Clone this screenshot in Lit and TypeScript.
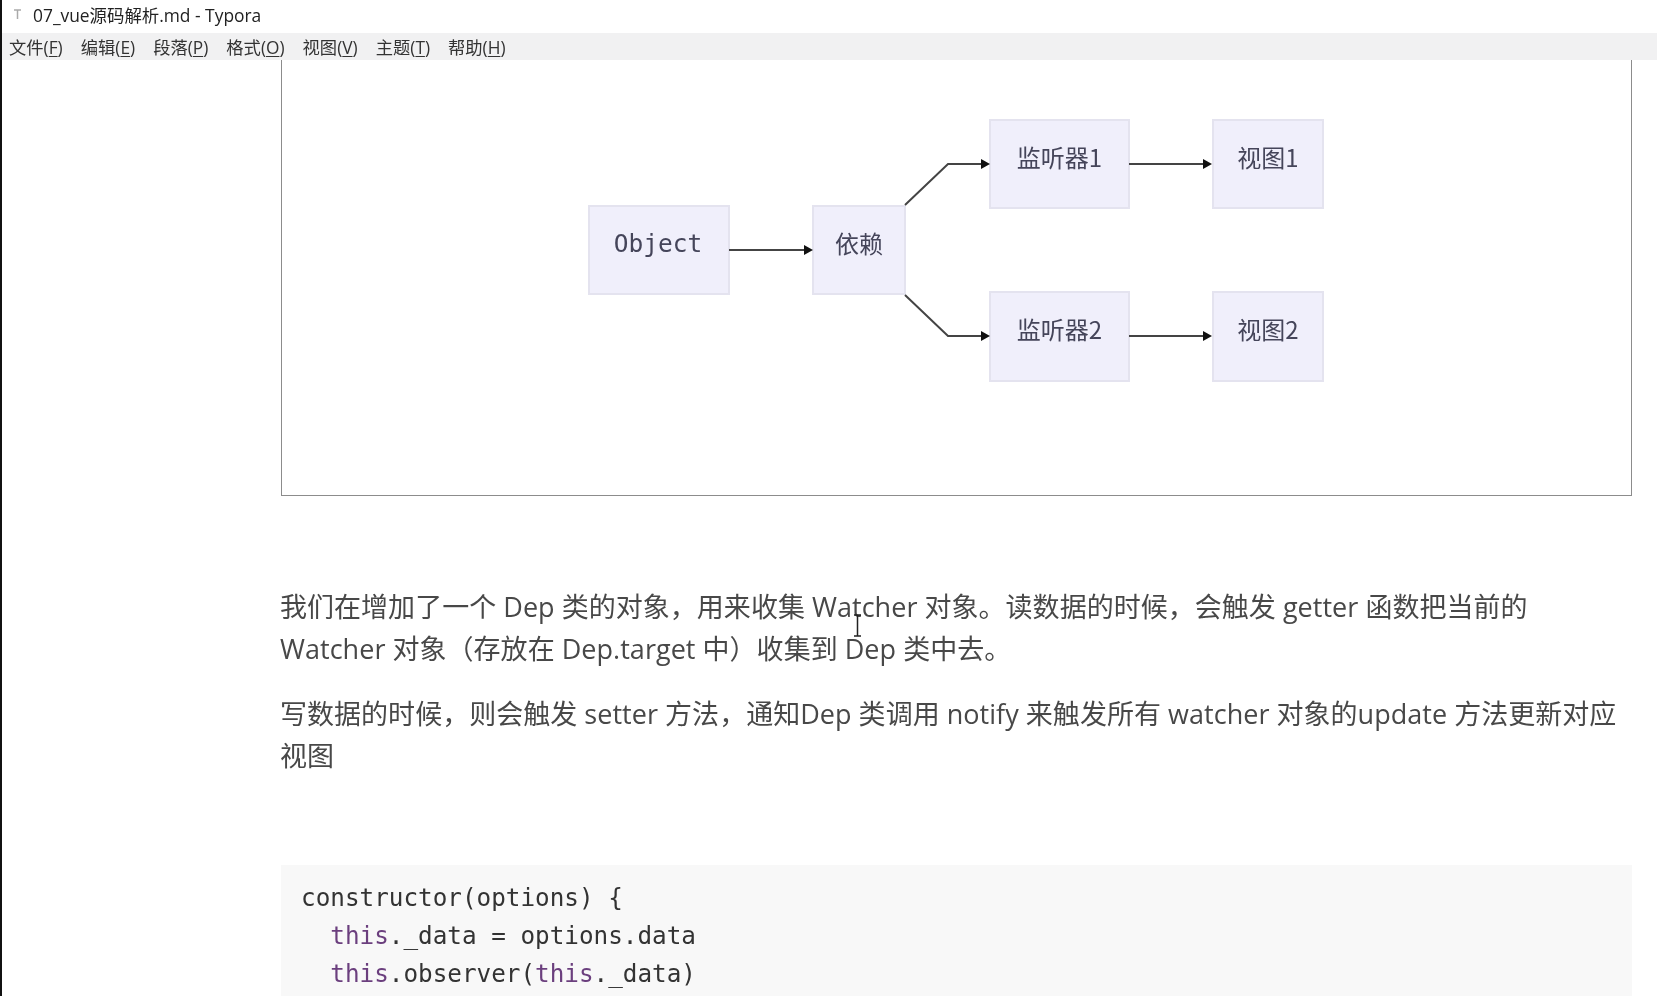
import { LitElement, html, css, svg } from "lit";
import { customElement } from "lit/decorators.js";

const nodes = [
  { x: 589, y: 206, w: 140, h: 88, label: "Object", mono: true },
  { x: 813, y: 206, w: 92, h: 88, label: "依赖" },
  { x: 990, y: 120, w: 139, h: 88, label: "监听器1" },
  { x: 1213, y: 120, w: 110, h: 88, label: "视图1" },
  { x: 990, y: 292, w: 139, h: 89, label: "监听器2" },
  { x: 1213, y: 292, w: 110, h: 89, label: "视图2" },
];
const edges = [
  "M729 250H806",
  "M905 205L948 164H984",
  "M905 295L948 336H984",
  "M1129 164H1206",
  "M1129 336H1206",
];
const heads = [
  [813, 250],
  [990, 164],
  [990, 336],
  [1212, 164],
  [1212, 336],
];
const menu: [string, string][] = [
  ["文件", "F"],
  ["编辑", "E"],
  ["段落", "P"],
  ["格式", "O"],
  ["视图", "V"],
  ["主题", "T"],
  ["帮助", "H"],
];

@customElement("app-root")
export class AppRoot extends LitElement {
  static styles = css`
    :host {
      display: block;
      position: relative;
      width: 1657px;
      height: 996px;
      overflow: hidden;
      background: #fff;
      font-family: "Open Sans", "Noto Sans CJK SC", sans-serif;
      color: #333;
      filter: blur(0.5px);
    }
    .edge { position: absolute; left: 0; top: 0; bottom: 0; width: 2px; background: #111; z-index: 3; }
    .title { height: 29px; padding: 0 0 4px 10px; display: flex; align-items: center; gap: 8px; font-size: 17.4px; color: #222; }
    .title svg { width: 15px; height: 15px; flex: none; }
    .menu { height: 27px; background: #f1f1f2; display: flex; align-items: center; padding-left: 9px; gap: 18px; font-size: 17.3px; color: #333; }
    .menu u { text-underline-offset: 2px; }
    .doc { padding: 0 25px 0 281px; }
    .frame { height: 436px; box-sizing: border-box; border: 1px solid #8c8c8c; border-top: none; margin-bottom: 90px; }
    .canvas { position: absolute; left: 0; top: 0; width: 1657px; height: 996px; pointer-events: none; }
    .canvas text { font-family: "Noto Sans CJK SC", sans-serif; font-size: 24px; fill: #45455a; text-anchor: middle; }
    .canvas text.mono { font-family: "DejaVu Sans Mono", monospace; font-size: 24.5px; }
    p { margin: 0 0 22px -1px; font-size: 27px; line-height: 42.3px; color: #484848; letter-spacing: 0.03px; }
    .code { margin-top: 88px; background: #f8f8f8; padding: 14px 20px 0; height: 200px; font-family: "DejaVu Sans Mono", monospace; font-size: 24.3px; line-height: 38px; white-space: pre; color: #333; }
    .kw { color: #6b3f7e; }
    .beam { position: absolute; left: 853px; top: 614px; width: 9px; height: 23px; }
  `;

  render() {
    return html`
      <div class="edge"></div>
      <div class="title">
        <svg viewBox="0 0 15 15"><path d="M4 3H11M7.500 3V12" stroke="#aaa" stroke-width="1.500" fill="none"/></svg>
        <span>07_vue源码解析.md - Typora</span>
      </div>
      <div class="menu">
        ${menu.map(([t, k]) => html`<span>${t}(<u>${k}</u>)</span>`)}
      </div>
      <div class="doc">
        <div class="frame"></div>
        <p>我们在增加了一个 Dep 类的对象，用来收集 Watcher 对象。读数据的时候，会触发 getter 函数把当前的 Watcher 对象（存放在 Dep.target 中）收集到 Dep 类中去。</p>
        <p>写数据的时候，则会触发 setter 方法，通知Dep 类调用 notify 来触发所有 watcher 对象的update 方法更新对应视图</p>
        <div class="code">constructor(options) {
  <span class="kw">this</span>._data = options.data
  <span class="kw">this</span>.observer(<span class="kw">this</span>._data)</div>
      </div>
      <svg class="canvas" viewBox="0 0 1657 996">
        ${nodes.map(
          (n) => svg`<rect x=${n.x} y=${n.y} width=${n.w} height=${n.h} fill="#f0effb" stroke="#e4e3ef" stroke-width="2"></rect>
            <text class=${n.mono ? "mono" : ""} x=${n.x + n.w / 2 - (n.mono ? 1 : 0)} y=${n.y + (n.mono ? 46 : 47)}>${n.label}</text>`
        )}
        ${edges.map((d) => svg`<path d=${d} fill="none" stroke="#444" stroke-width="2"></path>`)}
        ${heads.map(([x, y]) => svg`<path d="M${x} ${y}l-9 -5v10z" fill="#111"></path>`)}
      </svg>
      <svg class="beam" viewBox="0 0 9 23"><path d="M1 1H8M4.500 1V22M1 22H8" stroke="#222" stroke-width="1.500" fill="none"/></svg>
    `;
  }
}
